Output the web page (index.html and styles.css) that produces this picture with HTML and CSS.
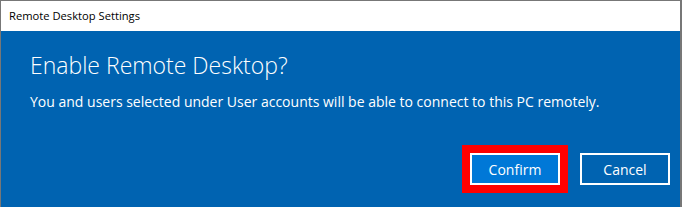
FILE: index.html
```html
<!DOCTYPE html>
<html lang="en">
<head>
    <meta charset="UTF-8">
    <title>Remote Desktop Settings</title>
    <link rel="stylesheet" href="styles.css">
</head>
<body>
    <div class="window">
        <div class="titlebar">Remote Desktop Settings</div>
        <div class="dialog">
            <h1 class="dialog-title">Enable Remote Desktop?</h1>
            <p class="dialog-text">You and users selected under User accounts will be able to connect to this PC remotely.</p>
            <div class="actions">
                <button class="btn btn-primary">Confirm</button>
                <button class="btn">Cancel</button>
            </div>
        </div>
    </div>
</body>
</html>
```

FILE: styles.css
```css
html, body {
    margin: 0;
    height: 100%;
}
body {
    font-family: "Open Sans", "Noto Sans", sans-serif;
    background-color: #0063b1;
}
.window {
    height: 100%;
    display: flex;
    flex-direction: column;
    border-top: 1px solid #777;
    border-left: 1px solid #777;
    border-right: 2px solid #777;
    box-sizing: border-box;
}
.titlebar {
    height: 30px;
    flex: none;
    background-color: #fff;
    color: #000;
    font-size: 11.2px;
    line-height: 30px;
    padding-left: 8px;
}
.dialog {
    flex: 1;
    background-color: #0063b1;
    color: #fff;
    padding: 0 10px 0 29px;
}
.dialog-title {
    margin: 18px 0 0;
    font-size: 23px;
    font-weight: 300;
    line-height: 32px;
}
.dialog-text {
    margin: 11px 0 0;
    font-size: 14px;
    line-height: 20px;
}
.actions {
    display: flex;
    justify-content: flex-end;
    gap: 20px;
    margin-top: 41px;
}
.btn {
    width: 90px;
    height: 32px;
    border: 2px solid #fff;
    background-color: #0063b1;
    color: #fff;
    font-family: inherit;
    font-size: 14px;
    padding: 0;
}
.btn-primary {
    background-color: #0078d7;
    box-shadow: 0 0 0 8px #f00;
}
```
